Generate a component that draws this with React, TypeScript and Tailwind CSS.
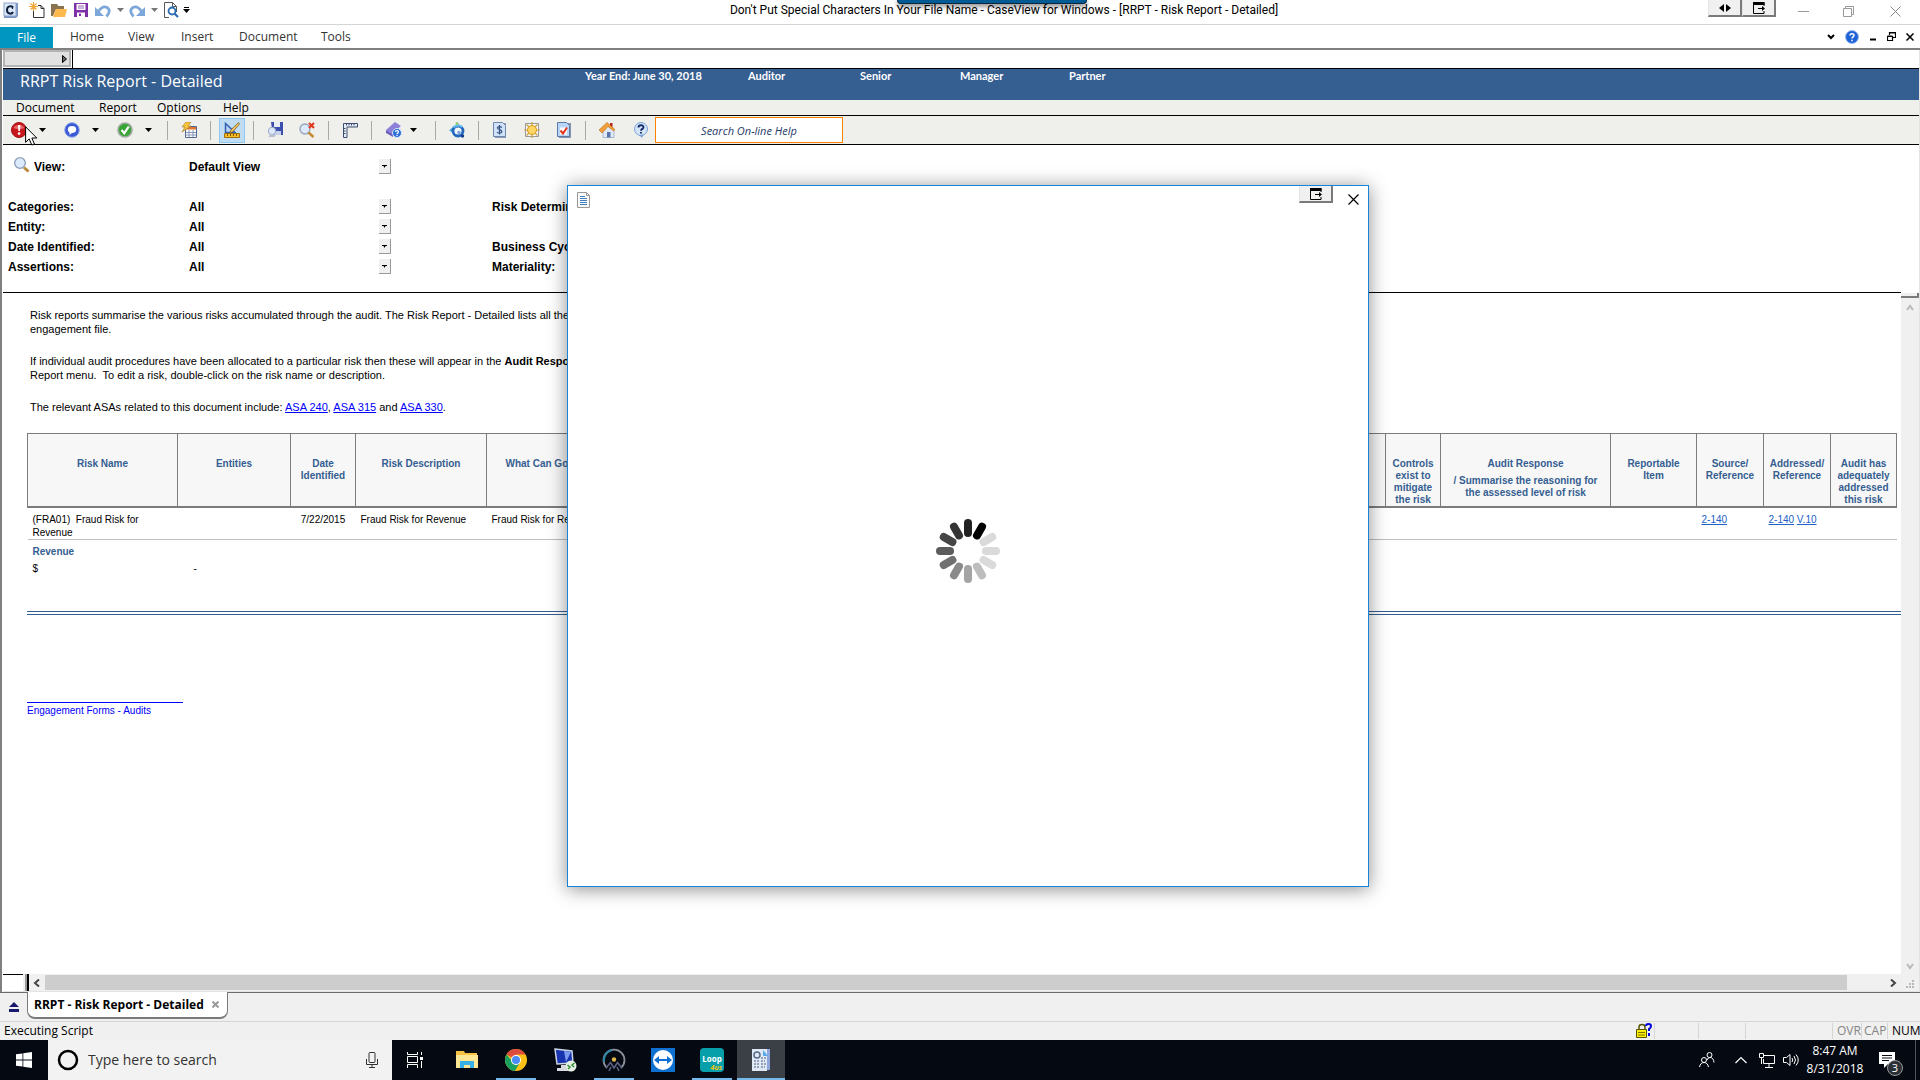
import type { ReactNode } from 'react'

const UI = "font-['Open_Sans','Noto_Sans',sans-serif]"
const ARIAL = "font-['Liberation_Sans',Arial,sans-serif]"

function Svg({ size = 16, box = 16, children }: { size?: number; box?: number; children: ReactNode }) {
  return (
    <svg width={size} height={size} viewBox={`0 0 ${box} ${box}`} fill="none" className="shrink-0" aria-hidden="true">
      {children}
    </svg>
  )
}

function Caret({ color = '#000' }: { color?: string }) {
  return (
    <svg width="7" height="4" viewBox="0 0 7 4" className="shrink-0" aria-hidden="true">
      <path d="M0 0h7L3.5 4z" fill={color} />
    </svg>
  )
}

/* ---------- Title bar ---------- */

const AppIcon = () => (
  <Svg>
    <path d="M3 1h12v13l-2 2H1V3z" fill="#7d96c4" />
    <rect x="1" y="1" width="12" height="13" fill="#dbe6f6" stroke="#8aa3cd" />
    <path d="M10 5.5C9 3.6 4 3.6 4 8s5 4.400 6 2" stroke="#0c1f3f" strokeWidth="2" />
    <path d="M9.500 4v3" stroke="#0c1f3f" strokeWidth="1.200" />
  </Svg>
)

const NewIcon = () => (
  <Svg>
    <path d="M9 3.500h3l3 3v9H4.500V9" stroke="#333" />
    <path d="M12 3.500v3h3" stroke="#333" />
    <path d="M4.500 0v9M0 4.500h9M1.500 1.500l6 6M7.500 1.500l-6 6" stroke="#f2a73b" strokeWidth="1.200" />
  </Svg>
)

const OpenIcon = () => (
  <Svg>
    <path d="M0 2h6l1.500 2H13v3H5L2 14H0z" fill="#8a7350" />
    <path d="M5 7h11l-2 8H2z" fill="#fdb94d" />
  </Svg>
)

const SaveIcon = () => (
  <Svg>
    <path d="M1 1h14v14H1z" fill="#7e2fa8" />
    <path d="M3.500 2h9v6h-9z" fill="#fff" />
    <path d="M5 4h6M5 6h6" stroke="#9a62bb" />
    <path d="M4 10.500h8V15H4z" fill="#fff" />
    <path d="M6 11.500h2V14H6z" fill="#7e2fa8" />
  </Svg>
)

const UndoIcon = ({ flip = false }: { flip?: boolean }) => (
  <Svg>
    <g transform={flip ? 'matrix(-1 0 0 1 16 0)' : undefined}>
      <path d="M0 5v9h9z" fill="#7da7d8" />
      <path d="M3 10C6 5.500 9 4 12 5.500s3 5.500-.500 9" stroke="#7da7d8" strokeWidth="2.800" />
    </g>
  </Svg>
)

const PreviewIcon = () => (
  <Svg>
    <path d="M6 15.500H1.500V.500h8l4 4V10M9.500.500v4h4" stroke="#555" />
    <circle cx="9" cy="9" r="3.500" fill="#fff" stroke="#2b6cb0" strokeWidth="1.800" />
    <path d="M11.500 11.500L15 15" stroke="#2b6cb0" strokeWidth="2.200" />
  </Svg>
)

const SwapGlyph = () => (
  <svg width="12" height="8" viewBox="0 0 12 8" aria-hidden="true">
    <path d="M5 0v8L0 4zM7 0v8l5-4z" fill="#000" />
  </svg>
)

const DetachGlyph = () => (
  <svg width="12" height="12" viewBox="0 0 12 12" fill="none" aria-hidden="true">
    <path d="M11 4V.500H.500v11h10.500V9" stroke="#000" />
    <path d="M0 0h11.500v3H0z" fill="#000" />
    <path d="M5 6.500h5" stroke="#000" />
    <path d="M9 4l3 2.500L9 9z" fill="#000" />
  </svg>
)

function RaisedButton({ label, children }: { label: string; children: ReactNode }) {
  return (
    <button
      aria-label={label}
      className="flex h-[17px] w-[34px] items-center justify-center border-r-2 border-b-2 border-l border-r-[#7a7a7a] border-b-[#7a7a7a] border-l-[#e3e3e3] bg-[#f0f0f0]"
    >
      {children}
    </button>
  )
}

function TitleBar() {
  return (
    <header className="relative flex h-[25px] items-start border-b border-[#d5d5d5] bg-white">
      <div className="flex h-5 items-center pl-[3px]">
        <AppIcon />
        <div className="flex items-center pl-2.5">
          <button aria-label="New" className="w-[22px]"><NewIcon /></button>
          <button aria-label="Open" className="w-[22px]"><OpenIcon /></button>
          <button aria-label="Save" className="w-[22px]"><SaveIcon /></button>
          <button aria-label="Undo" className="w-[22px]"><UndoIcon /></button>
          <button aria-label="Undo list" className="w-3"><Caret color="#777" /></button>
          <button aria-label="Redo" className="w-[22px]"><UndoIcon flip /></button>
          <button aria-label="Redo list" className="w-3"><Caret color="#777" /></button>
          <button aria-label="Print preview" className="w-5"><PreviewIcon /></button>
          <button aria-label="Customize toolbar" className="flex flex-col gap-px">
            <span className="h-px w-[5px] self-center bg-black" />
            <Caret />
          </button>
        </div>
      </div>
      <h1 className="absolute inset-x-0 top-0 pl-[88px] text-center font-[Roboto,sans-serif] text-xs leading-5 text-black">
        Don't Put Special Characters In Your File Name - CaseView for Windows - [RRPT - Risk Report - Detailed]
      </h1>
      <div className="absolute top-0 left-[897px] h-1 w-[190px] rounded-b border border-t-0 border-[#0b2740] bg-[#005b94] shadow-[0_2px_5px_rgba(0,0,0,0.6)]" />
      <div className="relative ml-auto flex">
        <div className="flex pr-2.5">
          <RaisedButton label="Switch screen"><SwapGlyph /></RaisedButton>
          <RaisedButton label="Detach window"><DetachGlyph /></RaisedButton>
        </div>
        <div className="flex h-[22px] items-center pr-1.5">
          <button aria-label="Minimize" className="flex w-[34px] justify-center">
            <Svg size={11} box={11}><path d="M0 5.500h11" stroke="#999" /></Svg>
          </button>
          <button aria-label="Restore" className="flex w-14 justify-center">
            <Svg size={11} box={11}><path d="M.500 2.500h8v8h-8zM2.500 2V.500h8v8H9" stroke="#999" /></Svg>
          </button>
          <button aria-label="Close" className="flex w-[38px] justify-center">
            <Svg size={11} box={11}><path d="M.500.500l10 10M10.500.500l-10 10" stroke="#888" /></Svg>
          </button>
        </div>
      </div>
    </header>
  )
}

function RibbonTabs() {
  return (
    <nav className={`flex h-[25px] items-center border-b-2 border-[#808080] bg-white text-xs text-[#333] ${UI}`}>
      <button className="h-[21px] w-[53px] self-end bg-[#0096c1] text-white">File</button>
      <button className="ml-[17px] w-[58px] text-left">Home</button>
      <button className="w-[53px] text-left">View</button>
      <button className="w-[58px] text-left">Insert</button>
      <button className="w-[82px] text-left">Document</button>
      <button>Tools</button>
      <div className="ml-auto flex items-center gap-2.5 pr-1.5">
        <button aria-label="Collapse ribbon">
          <Svg size={8} box={8}><path d="M1 2l3 3 3-3" stroke="#000" strokeWidth="2" /></Svg>
        </button>
        <button aria-label="Help">
          <Svg size={14} box={14}>
            <circle cx="7" cy="7" r="6.500" fill="#1f62d6" stroke="#9dbdf0" />
            <path d="M5 5.500C5 3.200 9 3.200 9 5.300 9 7 7 6.800 7 8.500M7 9.800v1.400" stroke="#fff" strokeWidth="1.500" />
          </Svg>
        </button>
        <button aria-label="Minimize document">
          <Svg size={8} box={8}><path d="M1 6.500h6" stroke="#000" strokeWidth="2" /></Svg>
        </button>
        <button aria-label="Restore document">
          <Svg size={9} box={9}><path d="M.500 4.500h5v4h-5zM.500 4h5M2.500 3V.500h6v5H6M2.500 1h6" stroke="#000" strokeWidth="1.200" /></Svg>
        </button>
        <button aria-label="Close document">
          <Svg size={8} box={8}><path d="M.500.500l7 7M7.500.500l-7 7" stroke="#000" strokeWidth="1.500" /></Svg>
        </button>
      </div>
    </nav>
  )
}

/* ---------- Document toolbar ---------- */

const AlertIcon = () => (
  <Svg>
    <circle cx="8" cy="8" r="7.500" fill="#c9171e" stroke="#a40f15" />
    <path d="M2.500 6a6 5 0 0 1 11 0c-3 1.500-8 1.500-11 0z" fill="#e86a6a" />
    <path d="M7 3h2.400l-.500 6H7.400z" fill="#fff" />
    <circle cx="8.100" cy="11.600" r="1.300" fill="#fff" />
  </Svg>
)

const ChatIcon = () => (
  <Svg>
    <circle cx="8" cy="8" r="7.200" fill="#3a59d6" stroke="#7e95e6" />
    <ellipse cx="8" cy="7.500" rx="4.200" ry="3.400" fill="#fff" />
    <path d="M5.500 9.500V13l3-2.500z" fill="#fff" />
  </Svg>
)

const CheckIcon = () => (
  <Svg>
    <circle cx="8" cy="8" r="7" fill="#3aa537" stroke="#a3aaa3" strokeWidth="1.600" />
    <path d="M4.500 8l2.800 3.200 4.500-6.700" stroke="#fff" strokeWidth="2.200" />
  </Svg>
)

const TableIcon = () => (
  <Svg>
    <path d="M4.500 4.500h11v11h-11z" fill="#fff" stroke="#54678e" />
    <path d="M5 5h10v2.500H5z" fill="#e0762f" />
    <path d="M5 10.500h10M5 13h10M8 8v7M12 8v7" stroke="#8495b8" />
    <path d="M5 0h5L7 4h3L1 10l3-5H1z" fill="#fbc53b" stroke="#9a7524" strokeWidth=".600" />
  </Svg>
)

const DesignIcon = () => (
  <Svg>
    <path d="M1.500 1.500v9H11z" fill="#b9d3f3" stroke="#2f5fae" strokeWidth="1.500" />
    <path d="M14.500.500l1 1.500-7 8-2.500 1 .800-2.800z" fill="#f6c766" stroke="#7a5a20" strokeWidth=".800" />
    <path d="M.500 11.500h15v4H.500z" fill="#fbbc23" stroke="#9c6f10" />
    <path d="M3.500 12v2M6.500 12v2M9.500 12v2M12.500 12v2" stroke="#7a560c" />
  </Svg>
)

const SaveFindIcon = () => (
  <Svg>
    <path d="M4 0h12v13H6z" fill="#3d4fae" />
    <path d="M7 0h6v5H7z" fill="#e7ecf8" />
    <path d="M7 9h7v4H7z" fill="#c9d0ea" />
    <circle cx="5" cy="9" r="3.700" fill="#dce9fa" stroke="#9aa9c8" />
    <path d="M3 12l-1.500 3h6l1.500-2" fill="#b9bfce" />
  </Svg>
)

const FindClearIcon = () => (
  <Svg>
    <circle cx="6" cy="7" r="5" fill="#dce9fa" stroke="#98a4bb" strokeWidth="1.400" />
    <path d="M9.500 10.500l5 4.500" stroke="#c28a35" strokeWidth="2.600" />
    <path d="M10 1l5 5M15 1l-5 5" stroke="#e2341d" strokeWidth="2" />
  </Svg>
)

const RulerIcon = () => (
  <Svg>
    <path d="M1.500 1.500h14V5H5v10.500H1.500z" fill="#e6edf8" stroke="#3c4c6e" />
    <path d="M4.500 2v1.500M7 2v1.500M9.500 2v1.500M12 2v1.500M2 6.500h1.500M2 9h1.500M2 11.500h1.500" stroke="#3c4c6e" />
  </Svg>
)

const BookIcon = () => (
  <Svg>
    <path d="M0 8l9-8 6 4-8 8z" fill="#8c80d8" />
    <path d="M0 8l7 4v3l-7-4z" fill="#6c60bf" />
    <path d="M7 12l8-8v3l-8 8z" fill="#e8e6f8" />
    <circle cx="11" cy="11" r="4.500" fill="#2b6fd6" stroke="#d6e5fa" />
    <path d="M9.500 10c0-1.800 3-1.800 3-.200 0 1.200-1.500 1-1.500 2.400M11 13v1" stroke="#fff" strokeWidth="1.200" />
  </Svg>
)

const RefreshIcon = () => (
  <Svg>
    <path d="M0 8.500L5 4v7z" fill="#4aa7e0" />
    <circle cx="9" cy="9" r="5" fill="#f3f8ff" stroke="#2468bd" strokeWidth="2.800" />
    <path d="M4.500 5.500A6 6 0 0 1 13 5" stroke="#64bfee" strokeWidth="2" />
    <circle cx="8" cy="1.500" r="1.500" fill="#8fc973" />
    <circle cx="10" cy="10.500" r="1.800" fill="#7fa5da" />
    <circle cx="13.500" cy="14" r="1.700" fill="#173d8a" />
  </Svg>
)

const DollarDocIcon = () => (
  <Svg>
    <path d="M3 1h11v15H3z" fill="#8d9ab5" />
    <path d="M1.500.500h9l3 3v11h-12z" fill="#cfe2f9" stroke="#6f87ad" />
    <path d="M9.800 5.500C8.500 4 5.300 4.300 5.400 6s4.400 1.400 4.400 3.400-3.600 2.200-4.800.600M7.500 3v9.500" stroke="#35507f" strokeWidth="1.200" />
  </Svg>
)

const SunIcon = () => (
  <Svg>
    <path d="M1.500 1.500h13v13h-13z" fill="#f4f4f0" stroke="#9a9a9a" />
    <path d="M8 0v16M0 8h16M2.500 2.500l11 11M13.500 2.500l-11 11" stroke="#c9a24e" strokeWidth="1.200" />
    <circle cx="8" cy="8" r="4.500" fill="#fdd663" stroke="#d99b1f" />
  </Svg>
)

const CheckDocIcon = () => (
  <Svg>
    <path d="M3 1h12v15H3z" fill="#8a94aa" />
    <path d="M1.500.500h9l3 3v11h-12z" fill="#b9d6f7" stroke="#5a78a8" />
    <path d="M4 5.500h7v7H4z" fill="#fff" />
    <path d="M4.500 8.500l2.500 3 4-6" stroke="#e8341c" strokeWidth="2" />
  </Svg>
)

const HomeIcon = () => (
  <Svg>
    <path d="M11 1h2.500v5H11z" fill="#b5261c" />
    <path d="M4 8l5-4 6 5v6.500H4z" fill="#dfe9f7" stroke="#8fa2c4" strokeWidth=".700" />
    <path d="M0 8l8-7.500 8 7-1.200 1.500L9 4.500 3 11z" fill="#f3a03a" stroke="#bd6e16" strokeWidth=".600" />
    <path d="M8 10h3.500v5.500H8z" fill="#5974ad" />
  </Svg>
)

const HelpBubbleIcon = () => (
  <Svg>
    <circle cx="8" cy="7" r="6.500" fill="#d4e5fa" stroke="#7ba2d8" />
    <path d="M6 13l3 3 1.500-3.500z" fill="#7ba2d8" />
    <path d="M5.500 5.500c0-3 5-3 5-.300C10.500 7 8 6.800 8 8.800M8 10v1.600" stroke="#132c66" strokeWidth="1.900" />
  </Svg>
)

function ToolButton({ label, active = false, children }: { label: string; active?: boolean; children: ReactNode }) {
  return (
    <button aria-label={label} className="flex w-8 items-center justify-center">
      {active ? (
        <span className="flex h-[25px] w-[26px] shrink-0 items-center justify-center border border-[#8fc8f2] bg-[#c0dcf3]">{children}</span>
      ) : (
        children
      )}
    </button>
  )
}

function ToolGroup({ children }: { children: ReactNode }) {
  return <div className="flex border-l border-[#a8a8a8] px-[5px]">{children}</div>
}

function SplitTool({ label, children }: { label: string; children: ReactNode }) {
  return (
    <div className="flex w-[53px]">
      <button aria-label={label} className="flex w-[30px] items-center justify-center">{children}</button>
      <button aria-label={`${label} list`} className="flex w-4 items-center justify-center"><Caret /></button>
    </div>
  )
}

function DocumentToolbar() {
  return (
    <div className="flex h-[30px] items-center border-y border-black bg-[#eff0eb] pl-px">
      <div className="flex h-[19px]">
        <SplitTool label="Issues"><AlertIcon /></SplitTool>
        <SplitTool label="Comments"><ChatIcon /></SplitTool>
        <SplitTool label="Sign off"><CheckIcon /></SplitTool>
      </div>
      <div className="ml-1 flex h-[19px] items-stretch">
        <ToolGroup><ToolButton label="Insert table"><TableIcon /></ToolButton></ToolGroup>
        <ToolGroup><ToolButton label="Design mode" active><DesignIcon /></ToolButton></ToolGroup>
        <ToolGroup>
          <ToolButton label="Save view"><SaveFindIcon /></ToolButton>
          <ToolButton label="Clear view"><FindClearIcon /></ToolButton>
        </ToolGroup>
        <ToolGroup><ToolButton label="Ruler"><RulerIcon /></ToolButton></ToolGroup>
        <ToolGroup>
          <div className="flex w-[53px] pl-1">
            <button aria-label="Library" className="flex w-[26px] items-center justify-center"><BookIcon /></button>
            <button aria-label="Library list" className="flex w-3 items-center justify-center"><Caret /></button>
          </div>
        </ToolGroup>
        <ToolGroup><ToolButton label="Refresh"><RefreshIcon /></ToolButton></ToolGroup>
        <ToolGroup>
          <ToolButton label="Balances"><DollarDocIcon /></ToolButton>
          <ToolButton label="Highlights"><SunIcon /></ToolButton>
          <ToolButton label="Checklist"><CheckDocIcon /></ToolButton>
        </ToolGroup>
        <div className="flex border-l border-[#a8a8a8] pl-[5px]">
          <ToolButton label="Home"><HomeIcon /></ToolButton>
          <button aria-label="Help" className="flex w-8 items-center justify-center pl-1"><HelpBubbleIcon /></button>
        </div>
      </div>
      <input
        aria-label="Search On-line Help"
        placeholder="Search On-line Help"
        className={`h-[26px] w-[188px] border border-[#ff8000] bg-white text-center text-[11px] text-[#1f3a68] italic placeholder:text-[#1f3a68] focus:outline-none ${UI}`}
      />
    </div>
  )
}

function DocumentHeader() {
  return (
    <>
      <div className="flex h-[19px] border-b border-black bg-white">
        <div className="w-[70px] border-r border-black">
          <button aria-label="Expand bar" className="flex h-[17px] w-[68px] items-center justify-end border-2 border-[#b4b4b4] bg-[#e1e1e1] pr-0.5">
            <svg width="5" height="8" viewBox="0 0 5 8" aria-hidden="true"><path d="M.5.5v7L4.500 4z" fill="#666" stroke="#000" /></svg>
          </button>
        </div>
      </div>
      <div className="flex h-[31px] items-start bg-[#355e91] text-white">
        <h2 className={`w-[582px] pl-[17px] text-base leading-6 ${UI}`}>RRPT Risk Report - Detailed</h2>
        <div className="flex pt-px text-[11px] leading-3 font-bold font-[Lato,sans-serif]">
          <span className="w-[163px]">Year End: June 30, 2018</span>
          <span className="w-28">Auditor</span>
          <span className="w-[100px]">Senior</span>
          <span className="w-[109px]">Manager</span>
          <span>Partner</span>
        </div>
      </div>
      <nav className={`flex h-[15px] items-center bg-[#eff0eb] pl-[13px] text-xs leading-[15px] text-black ${UI}`}>
        <button className="w-[83px] text-left">Document</button>
        <button className="w-[58px] text-left">Report</button>
        <button className="w-[66px] text-left">Options</button>
        <button>Help</button>
      </nav>
      <DocumentToolbar />
    </>
  )
}

/* ---------- Filters ---------- */

function Filter({ id, label, value, icon }: { id: string; label: string; value: string; icon?: ReactNode }) {
  return (
    <div className="flex h-5 items-center">
      <label htmlFor={id} className="flex w-[181px] items-center">{icon}{label}</label>
      <div className="relative w-[202px]">
        <select id={id} className="block w-full appearance-none bg-transparent font-bold focus:outline-none">
          <option>{value}</option>
        </select>
        <span className="pointer-events-none absolute top-0 right-0 flex h-[15px] w-3 items-center justify-center border-r border-b border-[#999] bg-[#f0f0f0]">
          <svg width="5" height="3" viewBox="0 0 5 3" aria-hidden="true"><path d="M0 0h5v1H3.500L2.500 3 1.500 1H0z" fill="#000" /></svg>
        </span>
      </div>
    </div>
  )
}

const LensIcon = () => (
  <Svg>
    <circle cx="6" cy="6" r="5.300" fill="#dcebfb" stroke="#8c9cb8" strokeWidth="1.300" />
    <path d="M10 10.500l4.500 4" stroke="#b98a3a" strokeWidth="3" />
  </Svg>
)

function Filters() {
  return (
    <section className={`h-[148px] border-b border-black pt-3 pl-[5px] text-xs font-bold text-black ${ARIAL}`}>
      <Filter id="view" label="View:" value="Default View" icon={<span className="mr-1 mb-1 ml-1.5"><LensIcon /></span>} />
      <div className="mt-5 flex">
        <div>
          <Filter id="categories" label="Categories:" value="All" />
          <Filter id="entity" label="Entity:" value="All" />
          <Filter id="date" label="Date Identified:" value="All" />
          <Filter id="assertions" label="Assertions:" value="All" />
        </div>
        <div className="ml-[101px] flex flex-col leading-5">
          <span className="h-10">Risk Determination:</span>
          <span>Business Cycle:</span>
          <span>Materiality:</span>
        </div>
      </div>
    </section>
  )
}

/* ---------- Report ---------- */

function Asa({ children }: { children: ReactNode }) {
  return <a href="#asa" className="text-[#0000ff] underline">{children}</a>
}

function RiskTable() {
  const th = 'border border-[#7c7c7c] border-b-2 px-1 pt-6 align-top font-bold'
  const td = 'px-[5px] pt-[5px] align-top'
  return (
    <table className="w-full table-fixed border-collapse text-[10px] leading-[13px]">
      <colgroup>
        <col className="w-[150px]" />
        <col className="w-[113px]" />
        <col className="w-[65px]" />
        <col className="w-[131px]" />
        <col className="w-[135px]" />
        <col />
        <col className="w-[55px]" />
        <col className="w-[170px]" />
        <col className="w-[86px]" />
        <col className="w-[67px]" />
        <col className="w-[67px]" />
        <col className="w-[66px]" />
      </colgroup>
      <thead>
        <tr className="h-[73px] bg-[#f7f7f7] text-center leading-3 text-[#355e91]">
          <th className={th}>Risk Name</th>
          <th className={th}>Entities</th>
          <th className={th}>Date Identified</th>
          <th className={th}>Risk Description</th>
          <th className={th}>What Can Go Wrong</th>
          <th className={th} />
          <th className={th}>Controls exist to mitigate the risk</th>
          <th className={th}>
            <div>Audit Response</div>
            <div className="mt-[5px]">/ Summarise the reasoning for the assessed level of risk</div>
          </th>
          <th className={th}>Reportable<br />Item</th>
          <th className={th}>Source/<br />Reference</th>
          <th className={th}><div className="-mx-1">Addressed/<br />Reference</div></th>
          <th className={th}><div className="-mx-1">Audit has adequately addressed this risk</div></th>
        </tr>
      </thead>
      <tbody className="text-black">
        <tr className="h-8 border-b border-[#bdbdbd]">
          <td className={td}>(FRA01)&nbsp; Fraud Risk for<br />Revenue</td>
          <td className={td} />
          <td className={`${td} text-center`}>7/22/2015</td>
          <td className={td}>Fraud Risk for Revenue</td>
          <td className={td}>Fraud Risk for Revenue</td>
          <td className={td} />
          <td className={td} />
          <td className={td} />
          <td className={td} />
          <td className={td}><a href="#2-140" className="text-[#2060c8] underline">2-140</a></td>
          <td className={td}>
            <a href="#2-140" className="text-[#2060c8] underline">2-140</a> <a href="#v10" className="text-[#2060c8] underline">V.10</a>
          </td>
          <td className={td} />
        </tr>
        <tr>
          <td className={`${td} font-bold text-[#355e91]`}>Revenue</td>
        </tr>
        <tr>
          <td className="px-[5px] pt-1">$</td>
          <td className="px-4 pt-1">-</td>
        </tr>
      </tbody>
    </table>
  )
}

function Report() {
  return (
    <section className={`min-h-0 flex-1 overflow-hidden pt-[15px] pl-6 text-black ${ARIAL}`}>
      <div className="pl-[3px] text-[11px] leading-[14px]">
        <p>
          Risk reports summarise the various risks accumulated through the audit. The Risk Report - Detailed lists all the individual risks in the
          <br />engagement file.
        </p>
        <p className="mt-[18px]">
          If individual audit procedures have been allocated to a particular risk then these will appear in the <b>Audit Response</b> column. See the
          <br />Report menu.&nbsp; To edit a risk, double-click on the risk name or description.
        </p>
        <p className="mt-[18px]">
          The relevant ASAs related to this document include: <Asa>ASA 240</Asa>, <Asa>ASA 315</Asa> and <Asa>ASA 330</Asa>.
        </p>
      </div>
      <div className="mt-[19px] pr-1">
        <RiskTable />
      </div>
      <div className="mt-9 h-1 border-y border-[#355e91]" />
      <div className="mt-[87px] w-[156px] border-t border-[#0000ff] pt-0.5 text-[10px] leading-3 text-[#0000ff]">
        <a href="#forms">Engagement Forms - Audits</a>
      </div>
    </section>
  )
}

/* ---------- Scroll bars and bottom bars ---------- */

function VerticalScroll() {
  return (
    <div className="flex w-[18px] flex-col items-center justify-between bg-[#f0f0f0] pt-1.5 pb-1">
      <Svg size={8} box={8}><path d="M1 6l3-4 3 4" stroke="#b8b8b8" strokeWidth="2" /></Svg>
      <Svg size={8} box={8}><path d="M1 2l3 4 3-4" stroke="#b8b8b8" strokeWidth="2" /></Svg>
    </div>
  )
}

function HorizontalScroll() {
  return (
    <div className="flex h-[18px] border-b border-[#e3e3e3] bg-[#f0f0f0]">
      <div className="w-5 border-t border-black bg-white" />
      <div className="w-1 border-r-2 border-[#9a9a9a] bg-[#f0f0f0]" />
      <div className="w-0.5 bg-black" />
      <div className="flex w-4 items-center justify-center">
        <Svg size={8} box={8}><path d="M6 .500L2 4l4 3.500" stroke="#444" strokeWidth="2" /></Svg>
      </div>
      <div className="my-px flex-1 bg-[#cdcdcd]" />
      <div className="flex w-[54px] items-center justify-end pr-1">
        <Svg size={8} box={8}><path d="M2 .500L6 4 2 7.500" stroke="#444" strokeWidth="2" /></Svg>
      </div>
      <div className="flex w-[18px] items-end justify-center pb-0.5">
        <Svg size={9} box={9}>
          <path d="M6 0h2v2H6zM3 3h2v2H3zM6 3h2v2H6zM0 6h2v2H0zM3 6h2v2H3zM6 6h2v2H6z" fill="#b8b8b8" />
        </Svg>
      </div>
    </div>
  )
}

function DocumentTabs() {
  return (
    <div className="flex h-[29px] items-start bg-[#f0f0f0]">
      <button aria-label="Document list" className="flex h-[29px] w-[27px] items-center justify-center border-t border-[#6b6b6b]">
        <svg width="10" height="10" viewBox="0 0 10 10" aria-hidden="true"><path d="M5 0l5 5H0zM0 7h10v3H0z" fill="#191970" /></svg>
      </button>
      <div className="flex h-[27px] w-[201px] items-center justify-between rounded-b-lg border-x border-b-2 border-[#7a7a7a] bg-white pr-2 pl-1.5">
        <button className={`text-xs font-bold text-black ${UI}`}>RRPT - Risk Report - Detailed</button>
        <button aria-label="Close tab">
          <Svg size={7} box={7}><path d="M.5.5l6 6M6.500.500l-6 6" stroke="#999" strokeWidth="2" /></Svg>
        </button>
      </div>
      <div className="h-px flex-1 bg-[#6b6b6b]" />
    </div>
  )
}

function StatusBar() {
  return (
    <footer className={`flex h-[19px] items-center border-t border-[#d5d5d5] bg-[#f0f0f0] pl-1 text-xs leading-4 text-black ${UI}`}>
      <span>Executing Script</span>
      <div className="ml-auto flex h-4 items-center text-[#848484]">
        <span className="w-[18px]">
          <Svg>
            <path d="M3 7V4q0-2.500 3-2.500T9 4v3" stroke="#555500" strokeWidth="1.500" />
            <path d="M.500 6.500h10v8h-10z" fill="#ffee00" stroke="#555500" />
            <path d="M2 9.500h7M2 12h7" stroke="#777700" />
            <path d="M10 3q0-2 2.500-2T15 3q0 2-2 3v2M13 10v3" stroke="#0000e0" strokeWidth="2" />
          </Svg>
        </span>
        <span className="h-4 w-11 border-l border-[#d5d5d5]" />
        <span className="h-4 w-[47px] border-l border-[#d5d5d5]" />
        <span className="h-4 w-[87px] border-l border-[#d5d5d5]" />
        <span className="w-[29px] border-l border-[#d5d5d5] pl-1">OVR</span>
        <span className="w-[26px] border-l border-[#d5d5d5] pl-0.5">CAP</span>
        <span className="w-[33px] border-l border-[#d5d5d5] pl-1 text-black">NUM</span>
      </div>
    </footer>
  )
}

/* ---------- Loading dialog ---------- */

const SPOKES = ['#222', '#000', '#dadada', '#dadada', '#dadada', '#bdbdbd', '#a4a4a4', '#8a8a8a', '#707070', '#5c5c5c', '#464646', '#343434']

function LoadingDialog() {
  return (
    <div
      role="dialog"
      aria-label="Loading"
      className="absolute top-[185px] left-[567px] h-[702px] w-[802px] border border-[#1883d7] bg-white shadow-[0_2px_18px_rgba(0,0,0,0.45)]"
    >
      <div className="flex items-start justify-between pr-[9px] pl-2">
        <span className="pt-1.5">
          <Svg>
            <path d="M1.500.500h9l3 3v12h-12z" fill="#fafafa" stroke="#999" />
            <path d="M10.500.500v3h3" stroke="#999" />
            <path d="M4 4.500h5M4 6.500h7M4 8.500h7M4 10.500h7M4 12.500h7" stroke="#3c7fc0" />
          </Svg>
        </span>
        <div className="flex">
          <RaisedButton label="Detach dialog"><DetachGlyph /></RaisedButton>
          <button aria-label="Close dialog" className="ml-[15px] pt-2">
            <Svg size={11} box={11}><path d="M.500.500l10 10M10.500.500l-10 10" stroke="#000" strokeWidth="1.200" /></Svg>
          </button>
        </div>
      </div>
      <div className="flex justify-center pt-[311px]">
        <svg width="64" height="64" viewBox="-32 -32 64 64" role="img" aria-label="Loading">
          {SPOKES.map((color, i) => (
            <rect key={i} x="-4" y="-32" width="8" height="18" rx="4" fill={color} transform={`rotate(${i * 30})`} />
          ))}
        </svg>
      </div>
    </div>
  )
}

/* ---------- Taskbar ---------- */

function TaskButton({ label, state = 'idle', children }: { label: string; state?: 'idle' | 'running' | 'active'; children: ReactNode }) {
  return (
    <button
      aria-label={label}
      className={`flex h-10 w-12 flex-col items-center justify-between pt-2 ${state === 'active' ? 'bg-[#3b4046]' : ''}`}
    >
      {children}
      {state === 'running' && <span className="h-0.5 w-10 bg-[#76b9ed]" />}
      {state === 'active' && <span className="h-0.5 w-12 bg-[#76b9ed]" />}
    </button>
  )
}

function Taskbar() {
  return (
    <div className={`flex h-10 items-stretch bg-[#050a12] text-white ${UI}`}>
      <button aria-label="Start" className="flex w-12 items-center justify-center">
        <Svg><path d="M0 2.300l6.500-.900v6.200H0zM7.300 1.300L16 0v7.600H7.300zM0 8.400h6.500v6.200L0 13.700zM7.300 8.400H16V16l-8.700-1.200z" fill="#fff" /></Svg>
      </button>
      <div className="flex w-[344px] items-center bg-[#f2f2f2] pr-3 pl-[9px]">
        <Svg size={22} box={22}><circle cx="11" cy="11" r="9" stroke="#000" strokeWidth="2.500" /></Svg>
        <input
          aria-label="Type here to search"
          placeholder="Type here to search"
          className="ml-[9px] min-w-0 flex-1 bg-transparent text-sm leading-5 text-[#333] placeholder:text-[#333] focus:outline-none"
        />
        <Svg>
          <rect x="5" y="0.500" width="6" height="10" rx="1" stroke="#333" />
          <path d="M2.500 7v5.500h11V7M8 12.500V15M5 15.500h6" stroke="#333" />
        </Svg>
      </div>
      <div className="flex gap-px">
        <button aria-label="Task view" className="flex w-[50px] items-center justify-center pr-1">
          <Svg>
            <path d="M.500 0v2.500h10V0M.500 4.500h10v6H.500zM.500 16v-3.500h10V16M14.500 0v3M14.500 9v7" stroke="#fff" />
            <path d="M13 5h3v3h-3z" fill="#fff" />
          </Svg>
        </button>
        <TaskButton label="File Explorer">
          <Svg size={24} box={24}>
            <path d="M1 3h8l1 2h12v15H1z" fill="#f5c344" />
            <path d="M1 7h22v13H1z" fill="#ffe694" />
            <path d="M5 20v-7h14v7h-4v-3h-6v3z" fill="#39b0e5" />
          </Svg>
        </TaskButton>
        <TaskButton label="Chrome" state="running">
          <Svg size={24} box={24}>
            <circle cx="12" cy="12" r="11" fill="#fbc116" />
            <path d="M12 12L2.500 6.500A11 11 0 0 1 21.500 6.500H12z" fill="#dd4b3e" />
            <path d="M2.500 6.500A11 11 0 0 0 11 23l5-9-4 3z" fill="#1aa15f" />
            <circle cx="12" cy="12" r="5" fill="#fff" />
            <circle cx="12" cy="12" r="4" fill="#4a8bf4" />
          </Svg>
        </TaskButton>
        <TaskButton label="Remote Desktop">
          <Svg size={24} box={24}>
            <path d="M2 1l17 2 1 12-16 1z" fill="#1733b0" stroke="#cdd5e3" strokeWidth="1.500" />
            <path d="M11 3l7 1-5 10z" fill="#7d9cf0" />
            <path d="M8 17h6v3h-6zM4 20h12v3H4z" fill="#d6d9de" />
            <circle cx="18" cy="18" r="5.500" fill="#e5eee5" />
            <path d="M14.500 17l2.500 2-2 2M21.500 15l-2.500 2 2 2" stroke="#2f8a2f" strokeWidth="1.500" />
          </Svg>
        </TaskButton>
        <TaskButton label="Owl" state="running">
          <Svg size={24} box={24}>
            <path d="M5 20a10.500 10.500 0 1 1 14 0" stroke="#8b9099" strokeWidth="1.800" />
            <path d="M2 14A10.500 10.500 0 0 1 10 2" stroke="#2d86a6" strokeWidth="2" />
            <path d="M4 20l4.500-5.500L12 20l3.500-5.500L20 20M7 23l2-4M17 23l-2-4" stroke="#5b6284" strokeWidth="1.600" />
            <circle cx="12" cy="11.500" r="2.200" fill="#e2b84b" />
          </Svg>
        </TaskButton>
        <TaskButton label="TeamViewer">
          <Svg size={24} box={24}>
            <path d="M0 0h24v24H0z" fill="#0e70d1" />
            <circle cx="12" cy="12" r="10" fill="#fff" />
            <path d="M3 12l5-4v3h8V8l5 4-5 4v-3H8v3z" fill="#0e70d1" />
          </Svg>
        </TaskButton>
        <TaskButton label="Loop" state="running">
          <span className="relative h-6 w-6 rounded bg-[#07a0aa] pt-1.5 text-center text-[8px] leading-[10px] font-bold">
            Loop
            <span className="absolute right-0.5 bottom-0 text-[7px] leading-[8px] text-[#f1c40f] italic">4us</span>
          </span>
        </TaskButton>
        <TaskButton label="CaseView" state="active">
          <Svg size={24} box={24}>
            <path d="M6 1h15v21H6z" fill="#8fa6dc" />
            <path d="M3 1h15v22H3z" fill="#dfe9f6" />
            <circle cx="8" cy="7" r="3" stroke="#5a6b88" strokeWidth="1.500" />
            <path d="M14 2l5 6h-5z" fill="#5aa9e6" />
            <path d="M5 13h5M5 16h5M5 19h5M12 10h5M12 13h4M12 16h5M12 19h4" stroke="#7d8ba3" strokeWidth="1.500" strokeDasharray="2 1" />
          </Svg>
        </TaskButton>
      </div>
      <div className="ml-auto flex items-center">
        <button aria-label="People" className="flex w-10 justify-center">
          <Svg>
            <circle cx="10.500" cy="3" r="2.500" stroke="#fff" />
            <circle cx="5" cy="8" r="2.500" stroke="#fff" />
            <path d="M.500 15q1-4.500 4.500-4.500T9.500 15M8 8q1-2.500 3-2.500 3.500 0 4 5" stroke="#fff" />
          </Svg>
        </button>
        <button aria-label="Show hidden icons" className="flex w-7 justify-center">
          <Svg size={12} box={12}><path d="M.500 9L6 3.500 11.500 9" stroke="#fff" strokeWidth="1.200" /></Svg>
        </button>
        <button aria-label="Network" className="flex w-6 justify-center">
          <Svg><path d="M5 3.500h10.500v8H4.500V7M10 12v3M6 15.500h8M.500 1.500h4v4h-4zM2.500 5.500V12" stroke="#fff" /></Svg>
        </button>
        <button aria-label="Volume" className="flex w-6 justify-center">
          <Svg><path d="M.500 5.500h3L7 2.500v11L3.500 10.500h-3zM9 6q1.500 2 0 4M11 4q3 4 0 8M13 2.500q4.500 5.500 0 11" stroke="#fff" /></Svg>
        </button>
        <div className="w-16 text-center text-xs leading-[18px]">
          <div>8:47 AM</div>
          <div>8/31/2018</div>
        </div>
        <button aria-label="Notifications" className="relative mr-2 flex h-10 w-10 items-center justify-center">
          <Svg>
            <path d="M0 0h16v12H9l-4 4v-4H0z" fill="#fff" />
            <path d="M3 3.500h10M3 6h10M3 8.500h7" stroke="#050a12" />
          </Svg>
          <span className="absolute right-1 bottom-1 flex h-4 w-4 items-center justify-center rounded-full border border-[#9a9a9a] bg-[#2b2f36] text-[11px] leading-3">3</span>
        </button>
        <span className="mr-1 h-10 w-px bg-[#50555c]" />
      </div>
    </div>
  )
}

export default function App() {
  return (
    <div className="relative flex h-screen flex-col overflow-hidden bg-white">
      <TitleBar />
      <RibbonTabs />
      <main className="flex min-h-0 flex-1 flex-col border-r border-l-2 border-r-[#e3e3e3] border-l-[#808080] pl-px">
        <DocumentHeader />
        <div className="flex min-h-0 flex-1">
          <div className="flex min-w-0 flex-1 flex-col">
            <Filters />
            <Report />
          </div>
          <div className="flex flex-col pt-[148px]">
            <div className="h-[5px] border-r-2 border-b-2 border-[#7a7a7a] bg-[#f0f0f0]" />
            <div className="flex flex-1"><VerticalScroll /></div>
          </div>
        </div>
        <HorizontalScroll />
      </main>
      <DocumentTabs />
      <StatusBar />
      <Taskbar />
      <LoadingDialog />
      <svg width="13" height="20" viewBox="0 0 13 20" className="pointer-events-none absolute top-[126px] left-[25px]" aria-hidden="true">
        <path d="M.600.800v15.500l3.600-3.400 2.600 6.200 2.600-1.100-2.600-6h5z" fill="#fff" stroke="#000" />
      </svg>
    </div>
  )
}
